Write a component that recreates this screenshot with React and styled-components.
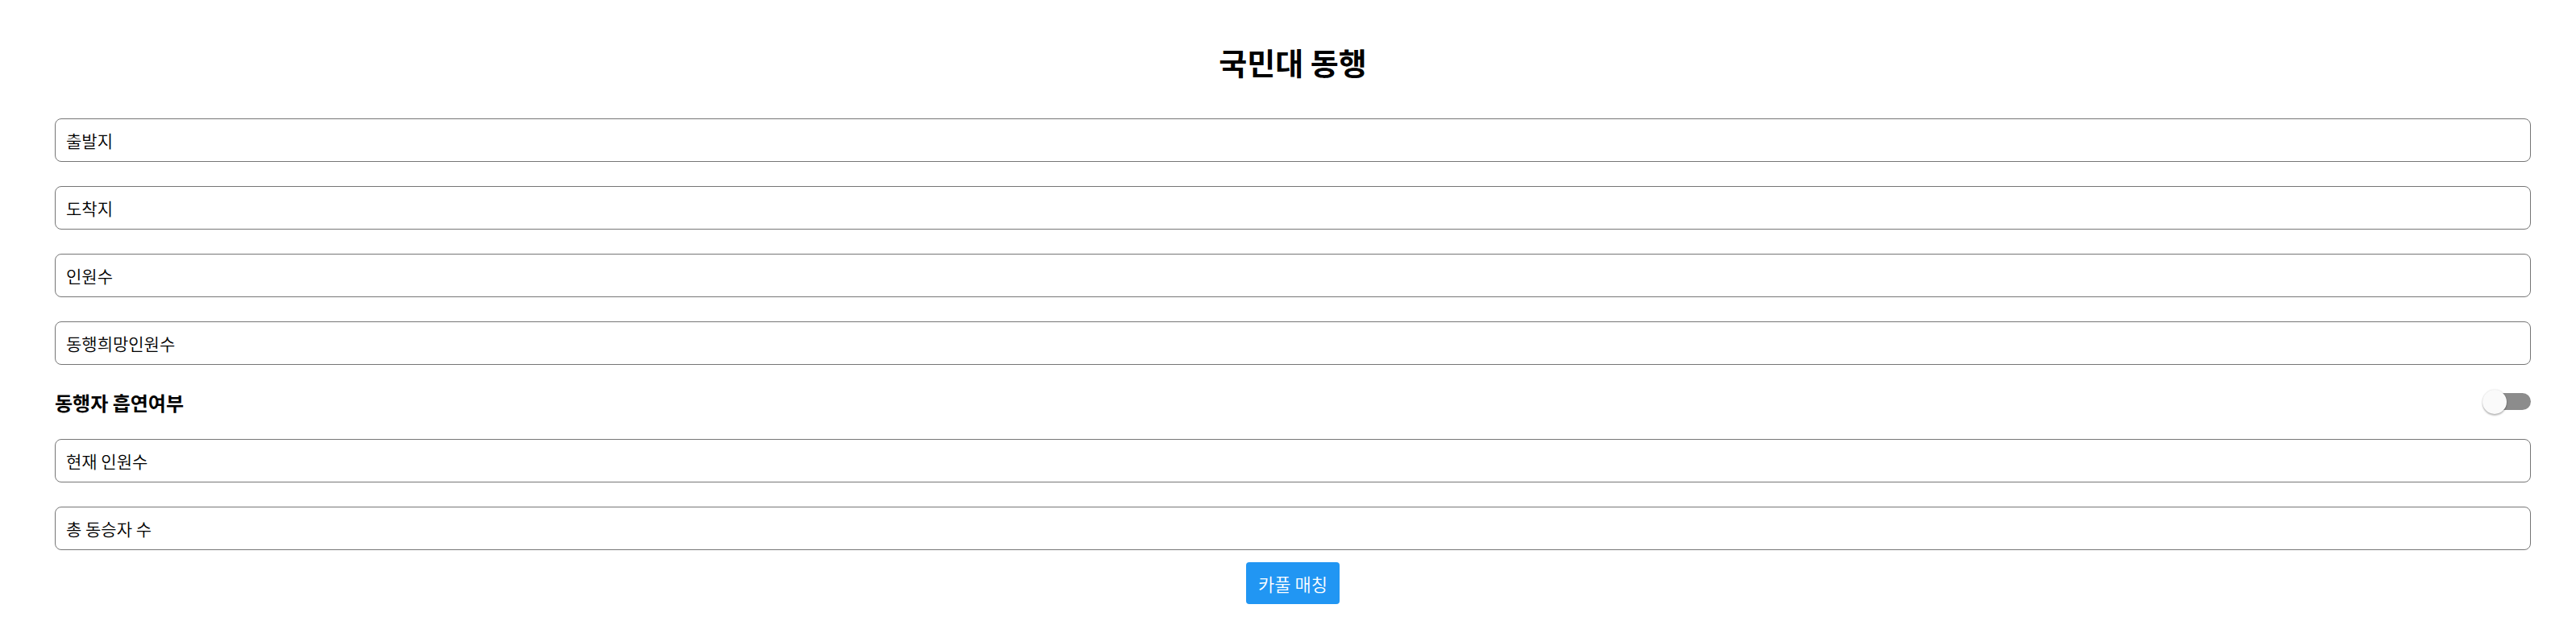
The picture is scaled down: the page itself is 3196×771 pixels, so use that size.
import React, { useState } from 'react';
import styled, { createGlobalStyle } from 'styled-components';

const GlobalStyle = createGlobalStyle`
  html, body {
    margin: 0;
    padding: 0;
    background: #fff;
  }
  body {
    font-family: "Noto Sans CJK KR", "Noto Sans", sans-serif;
    color: #000;
  }
`;

const PageStyle = styled.div`
  display: flex;
  flex-direction: column;
  padding: 0 56px 0 68px;
`;

const TitleStyle = styled.h2`
  margin: 0;
  height: 147px;
  padding-top: 50px;
  box-sizing: border-box;
  font-size: 38px;
  font-weight: 700;
  line-height: 54px;
  text-align: center;
`;

const FieldStyle = styled.input`
  box-sizing: border-box;
  width: 100%;
  height: 54px;
  margin: 0 0 ${props => props.$gap}px 0;
  padding: 0 13px;
  border: 1px solid #767676;
  border-radius: 8px;
  font-family: "Noto Sans CJK KR", "Noto Sans", sans-serif;
  font-size: 21px;
  font-weight: 350;
  color: #000;
  background: #fff;
  outline: none;
  &::placeholder {
    color: #000;
    opacity: 1;
  }
`;

const ToggleRowStyle = styled.div`
  display: flex;
  align-items: center;
  justify-content: space-between;
  height: 32px;
  margin: 0 0 30px 0;
`;

const ToggleLabelStyle = styled.span`
  font-size: 24px;
  font-weight: 700;
`;

const SwitchStyle = styled.button`
  position: relative;
  width: 60px;
  height: 30px;
  padding: 0;
  border: none;
  background: transparent;
  cursor: pointer;
`;

const SwitchTrackStyle = styled.span`
  position: absolute;
  right: 0;
  top: 4px;
  width: 57px;
  height: 21px;
  border-radius: 11px;
  background: ${props => (props.$on ? '#90caf9' : '#8c8c8c')};
`;

const SwitchKnobStyle = styled.span`
  position: absolute;
  top: 0;
  left: ${props => (props.$on ? '29px' : '0')};
  width: 30px;
  height: 30px;
  border-radius: 50%;
  background: ${props => (props.$on ? '#2196f3' : '#fafafa')};
  box-shadow: 0 2px 2px rgba(0, 0, 0, 0.24), 0 0 2px rgba(0, 0, 0, 0.18);
`;

const ButtonRowStyle = styled.div`
  display: flex;
  justify-content: center;
`;

const MatchButtonStyle = styled.button`
  height: 52px;
  padding: 0 15px;
  border: none;
  border-radius: 4px;
  background: #2196f3;
  color: #fff;
  font-family: "Noto Sans CJK KR", "Noto Sans", sans-serif;
  font-size: 22px;
  font-weight: 350;
  cursor: pointer;
`;

const Toggle = ({ on, onChange }) => (
  <SwitchStyle type="button" onClick={() => onChange(!on)}>
    <SwitchTrackStyle $on={on} />
    <SwitchKnobStyle $on={on} />
  </SwitchStyle>
);

export default function App() {
  const [smoking, setSmoking] = useState(false);

  return (
    <PageStyle>
      <GlobalStyle />
      <TitleStyle>국민대 동행</TitleStyle>
      <FieldStyle $gap={30} placeholder="출발지" />
      <FieldStyle $gap={30} placeholder="도착지" />
      <FieldStyle $gap={30} placeholder="인원수" />
      <FieldStyle $gap={30} placeholder="동행희망인원수" />
      <ToggleRowStyle>
        <ToggleLabelStyle>동행자 흡연여부</ToggleLabelStyle>
        <Toggle on={smoking} onChange={setSmoking} />
      </ToggleRowStyle>
      <FieldStyle $gap={30} placeholder="현재 인원수" />
      <FieldStyle $gap={15} placeholder="총 동승자 수" />
      <ButtonRowStyle>
        <MatchButtonStyle type="button">카풀 매칭</MatchButtonStyle>
      </ButtonRowStyle>
    </PageStyle>
  );
}
